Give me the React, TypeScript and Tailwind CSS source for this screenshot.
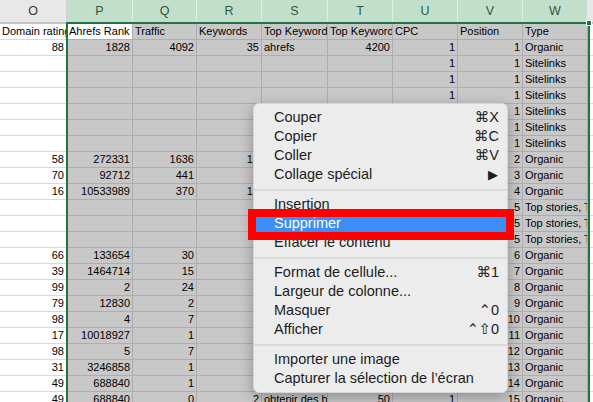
import React from 'react';

const columns = [
  { label: 'O', width: 'w-[67px]', selected: false },
  { label: 'P', width: 'w-[66px]', selected: true },
  { label: 'Q', width: 'w-[64px]', selected: true },
  { label: 'R', width: 'w-[65px]', selected: true },
  { label: 'S', width: 'w-[66px]', selected: true },
  { label: 'T', width: 'w-[65px]', selected: true },
  { label: 'U', width: 'w-[65px]', selected: true },
  { label: 'V', width: 'w-[65px]', selected: true },
  { label: 'W', width: 'w-[65px]', selected: true },
];

// cells hidden under the context menu are left empty
const rows: string[][] = [
  ['Domain rating', 'Ahrefs Rank', 'Traffic', 'Keywords', 'Top Keywords', 'Top Keyword volume', 'CPC', 'Position', 'Type'],
  ['88', '1828', '4092', '35', 'ahrefs', '4200', '1', '1', 'Organic'],
  ['', '', '', '', '', '', '1', '1', 'Sitelinks'],
  ['', '', '', '', '', '', '1', '1', 'Sitelinks'],
  ['', '', '', '', '', '', '1', '1', 'Sitelinks'],
  ['', '', '', '', '', '', '', '1', 'Sitelinks'],
  ['', '', '', '', '', '', '', '1', 'Sitelinks'],
  ['', '', '', '', '', '', '', '1', 'Sitelinks'],
  ['58', '272331', '1636', '12', '', '', '', '2', 'Organic'],
  ['70', '92712', '441', '', '', '', '', '3', 'Organic'],
  ['16', '10533989', '370', '14', '', '', '', '4', 'Organic'],
  ['', '', '', '', '', '', '', '5', 'Top stories, Twitter'],
  ['', '', '', '', '', '', '', '5', 'Top stories, Twitter'],
  ['', '', '', '', '', '', '', '5', 'Top stories, Twitter'],
  ['66', '133654', '30', '', '', '', '', '6', 'Organic'],
  ['39', '1464714', '15', '', '', '', '', '7', 'Organic'],
  ['99', '2', '24', '', '', '', '', '8', 'Organic'],
  ['79', '12830', '2', '', '', '', '', '9', 'Organic'],
  ['98', '4', '7', '', '', '', '', '10', 'Organic'],
  ['17', '10018927', '1', '', '', '', '', '11', 'Organic'],
  ['98', '5', '7', '', '', '', '', '12', 'Organic'],
  ['31', '3246858', '1', '', '', '', '', '13', 'Organic'],
  ['49', '688840', '1', '', '', '', '', '14', 'Organic'],
  ['49', '688840', '0', '2', 'obtenir des backlinks', '50', '1', '15', 'Organic'],
];

type MenuEntry = { label: string; shortcut?: string; active?: boolean } | 'sep';

const menu: MenuEntry[] = [
  { label: 'Couper', shortcut: '⌘X' },
  { label: 'Copier', shortcut: '⌘C' },
  { label: 'Coller', shortcut: '⌘V' },
  { label: 'Collage spécial', shortcut: '▶' },
  'sep',
  { label: 'Insertion' },
  { label: 'Supprimer', active: true },
  { label: 'Effacer le contenu' },
  'sep',
  { label: 'Format de cellule...', shortcut: '⌘1' },
  { label: 'Largeur de colonne...' },
  { label: 'Masquer', shortcut: '⌃0' },
  { label: 'Afficher', shortcut: '⌃⇧0' },
  'sep',
  { label: 'Importer une image' },
  { label: 'Capturer la sélection de l’écran' },
];

const isNumber = (v: string) => /^\d+$/.test(v);

const App: React.FC = () => {
  return (
    <div
      className="relative w-[593px] h-[402px] overflow-hidden bg-white"
      style={{ fontFamily: '"Liberation Sans", "DejaVu Sans", sans-serif' }}
    >
      {/* column headers */}
      <div className="flex">
        {columns.map((col) => (
          <div
            key={col.label}
            className={
              col.selected
                ? `${col.width} shrink-0 h-[24px] flex items-center justify-center text-[12.5px] text-[#2d5a3c] bg-[#c1dfcb] border-r border-[#dcefe2] border-b-2 border-b-[#217346]`
                : `${col.width} shrink-0 h-[24px] flex items-center justify-center text-[12.5px] text-[#3a3a3a] bg-[#e8e8e8] border-r border-[#d0d0d0] border-b-2 border-b-[#c4c4c4]`
            }
          >
            {col.label}
          </div>
        ))}
        <div className="flex-1 h-[24px] bg-[#e8e8e8] border-b-2 border-b-[#c4c4c4]" />
      </div>

      {/* cells */}
      {rows.map((row, r) => (
        <div key={r} className="flex">
          {row.map((value, c) => {
            const col = columns[c];
            const active = r === 0 && c === 1;
            const base = `${col.width} shrink-0 h-[16px] px-[2px] text-[11px] leading-[15px] text-black whitespace-nowrap overflow-hidden border-r border-b`;
            const tone = !col.selected
              ? 'bg-white border-[#d9d9d9]'
              : active
                ? 'bg-white border-[#adadad]'
                : 'bg-[#c8c8c8] border-[#adadad]';
            return (
              <div key={c} className={`${base} ${tone} ${isNumber(value) ? 'text-right' : 'text-left'}`}>
                {value}
              </div>
            );
          })}
          <div className="flex-1 h-[16px] border-b border-[#d9d9d9] bg-white" />
        </div>
      ))}

      {/* selection outline */}
      <div className="absolute left-[66px] top-[22px] w-[524px] h-[400px] border-2 border-b-0 border-[#217346]" />
      <div className="absolute left-[586px] top-[20px] w-[6px] h-[6px] bg-[#217346] border border-white" />

      {/* context menu */}
      <div className="absolute left-[253px] top-[103px] w-[255px] py-[4px] rounded-[6px] bg-[#ececec] shadow-[0_4px_14px_rgba(0,0,0,0.3)] border border-[#d6d6d6] text-[14.5px]">
        {menu.map((item, i) =>
          item === 'sep' ? (
            <div key={i} className="h-[11px] flex items-center">
              <div className="w-full h-[2px] bg-[#dadada]" />
            </div>
          ) : (
            <div
              key={i}
              className={`h-[19px] pl-[20px] pr-[8px] flex items-center justify-between ${
                item.active ? 'bg-[#3a8ef6] text-white' : 'text-[#1d1d1d]'
              }`}
            >
              <span>{item.label}</span>
              {item.shortcut && (
                <span className={item.shortcut === '▶' ? 'text-[13px] pr-[1px]' : ''}>
                  {item.shortcut}
                </span>
              )}
            </div>
          )
        )}
      </div>

      {/* red highlight box */}
      <div className="absolute left-[248px] top-[209px] w-[266px] h-[31px] border-[8px] border-[#ff0000]" />
    </div>
  );
};

export default App;
